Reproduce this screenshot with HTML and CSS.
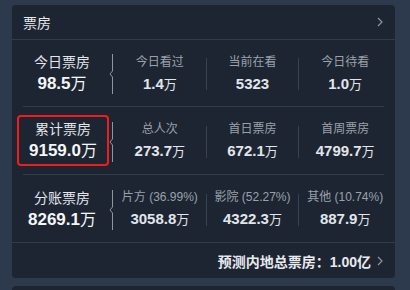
FILE: index.html
```html
<!DOCTYPE html>
<html lang="zh-CN">

<head>
    <meta charset="UTF-8" />
    <meta name="viewport" content="width=device-width, initial-scale=1.0" />
    <title>票房</title>
    <link rel="stylesheet" href="styles.css">
</head>

<body>
    <div class="page">
        <section class="card">
            <header class="card-head">
                <span class="card-title">票房</span>
                <svg class="arrow" width="6" height="10" viewBox="0 0 6 10"><path d="M1 1 L5 5 L1 9" /></svg>
            </header>

            <div class="row">
                <div class="main">
                    <span class="main-label">今日票房</span>
                    <span class="main-value">98.5<small>万</small></span>
                </div>
                <svg class="notch" width="6" height="40" viewBox="0 0 6 40"><path d="M4.5 0 V17 L2 20 L4.5 23 V40" /></svg>
                <div class="stat">
                    <span class="label">今日看过</span>
                    <span class="value">1.4<small>万</small></span>
                </div>
                <i class="bar"></i>
                <div class="stat">
                    <span class="label">当前在看</span>
                    <span class="value">5323</span>
                </div>
                <i class="bar"></i>
                <div class="stat">
                    <span class="label">今日待看</span>
                    <span class="value">1.0<small>万</small></span>
                </div>
            </div>

            <div class="rule"></div>

            <div class="row">
                <div class="main highlight">
                    <span class="main-label">累计票房</span>
                    <span class="main-value">9159.0<small>万</small></span>
                </div>
                <svg class="notch" width="6" height="40" viewBox="0 0 6 40"><path d="M4.5 0 V17 L2 20 L4.5 23 V40" /></svg>
                <div class="stat">
                    <span class="label">总人次</span>
                    <span class="value">273.7<small>万</small></span>
                </div>
                <i class="bar"></i>
                <div class="stat">
                    <span class="label">首日票房</span>
                    <span class="value">672.1<small>万</small></span>
                </div>
                <i class="bar"></i>
                <div class="stat">
                    <span class="label">首周票房</span>
                    <span class="value">4799.7<small>万</small></span>
                </div>
            </div>

            <div class="rule"></div>

            <div class="row">
                <div class="main">
                    <span class="main-label">分账票房</span>
                    <span class="main-value">8269.1<small>万</small></span>
                </div>
                <svg class="notch" width="6" height="40" viewBox="0 0 6 40"><path d="M4.5 0 V17 L2 20 L4.5 23 V40" /></svg>
                <div class="stat">
                    <span class="label">片方 (36.99%)</span>
                    <span class="value">3058.8<small>万</small></span>
                </div>
                <i class="bar"></i>
                <div class="stat">
                    <span class="label">影院 (52.27%)</span>
                    <span class="value">4322.3<small>万</small></span>
                </div>
                <i class="bar"></i>
                <div class="stat">
                    <span class="label">其他 (10.74%)</span>
                    <span class="value">887.9<small>万</small></span>
                </div>
            </div>

            <footer class="card-foot">
                <span>预测内地总票房：1.00亿</span>
                <svg class="arrow" width="6" height="10" viewBox="0 0 6 10"><path d="M1 1 L5 5 L1 9" /></svg>
            </footer>
        </section>

        <section class="card next"></section>
    </div>
</body>

</html>
```

FILE: styles.css
```css
html,
body {
    margin: 0;
    padding: 0;
    height: 100%;
}

body {
    background-color: #2d3a4e;
    font-family: "Liberation Sans", "Noto Sans CJK SC", sans-serif;
    overflow: hidden;
}

.page {
    padding: 5px 15px 0 12px;
}

.card {
    width: 383px;
    background-color: #1d2532;
    border-radius: 4px;
}

.card.next {
    height: 4px;
    margin-top: 8px;
    border-radius: 4px 4px 0 0;
}

.card-head {
    box-sizing: border-box;
    height: 35px;
    display: flex;
    align-items: center;
    justify-content: space-between;
    padding: 0 12px 0 11px;
    border-bottom: 1px solid #323d4c;
}

.card-title {
    font-size: 14px;
    color: #e6e8ec;
}

.arrow path {
    fill: none;
    stroke: #8b94a1;
    stroke-width: 1.2;
}

.row {
    box-sizing: border-box;
    height: 67px;
    padding: 2px 4px 0 0;
    display: grid;
    grid-template-columns: 96px 6px 1fr 1px 1fr 1px 1fr;
    align-items: center;
}

.row:first-of-type {
    height: 66px;
}

.rule {
    height: 1px;
    margin: 0 11px;
    background-color: #323d4c;
}

.main,
.stat {
    display: flex;
    flex-flow: column;
    align-items: center;
    gap: 2px;
    white-space: nowrap;
}

.main {
    padding-left: 4px;
}

.main.highlight {
    box-sizing: border-box;
    width: 92px;
    height: 51px;
    margin: -2px 0 0 5px;
    padding: 0;
    justify-content: center;
    border: 2px solid #f21d1a;
    border-radius: 4px;
}

.main-label {
    font-size: 14px;
    line-height: 18px;
    color: #e2e5ea;
}

.main-value {
    font-size: 17px;
    line-height: 22px;
    font-weight: bold;
    color: #f4f6f8;
}

.main-value small {
    font-size: 16px;
    font-weight: normal;
}

.label {
    font-size: 12px;
    line-height: 18px;
    color: #9aa1ac;
}

.value {
    font-size: 15px;
    line-height: 22px;
    font-weight: bold;
    color: #e2e5ea;
}

.value small {
    font-size: 13px;
    font-weight: normal;
}

.notch {
    align-self: center;
}

.notch path {
    fill: none;
    stroke: #8d96a3;
    stroke-width: 1;
}

.bar {
    align-self: center;
    height: 32px;
    background-color: #374252;
}

.card-foot {
    box-sizing: border-box;
    height: 36px;
    display: flex;
    align-items: center;
    justify-content: flex-end;
    gap: 6px;
    padding: 0 12px 0 0;
    border-top: 1px solid #323d4c;
    font-size: 14px;
    font-weight: bold;
    color: #e8eaee;
}
```
